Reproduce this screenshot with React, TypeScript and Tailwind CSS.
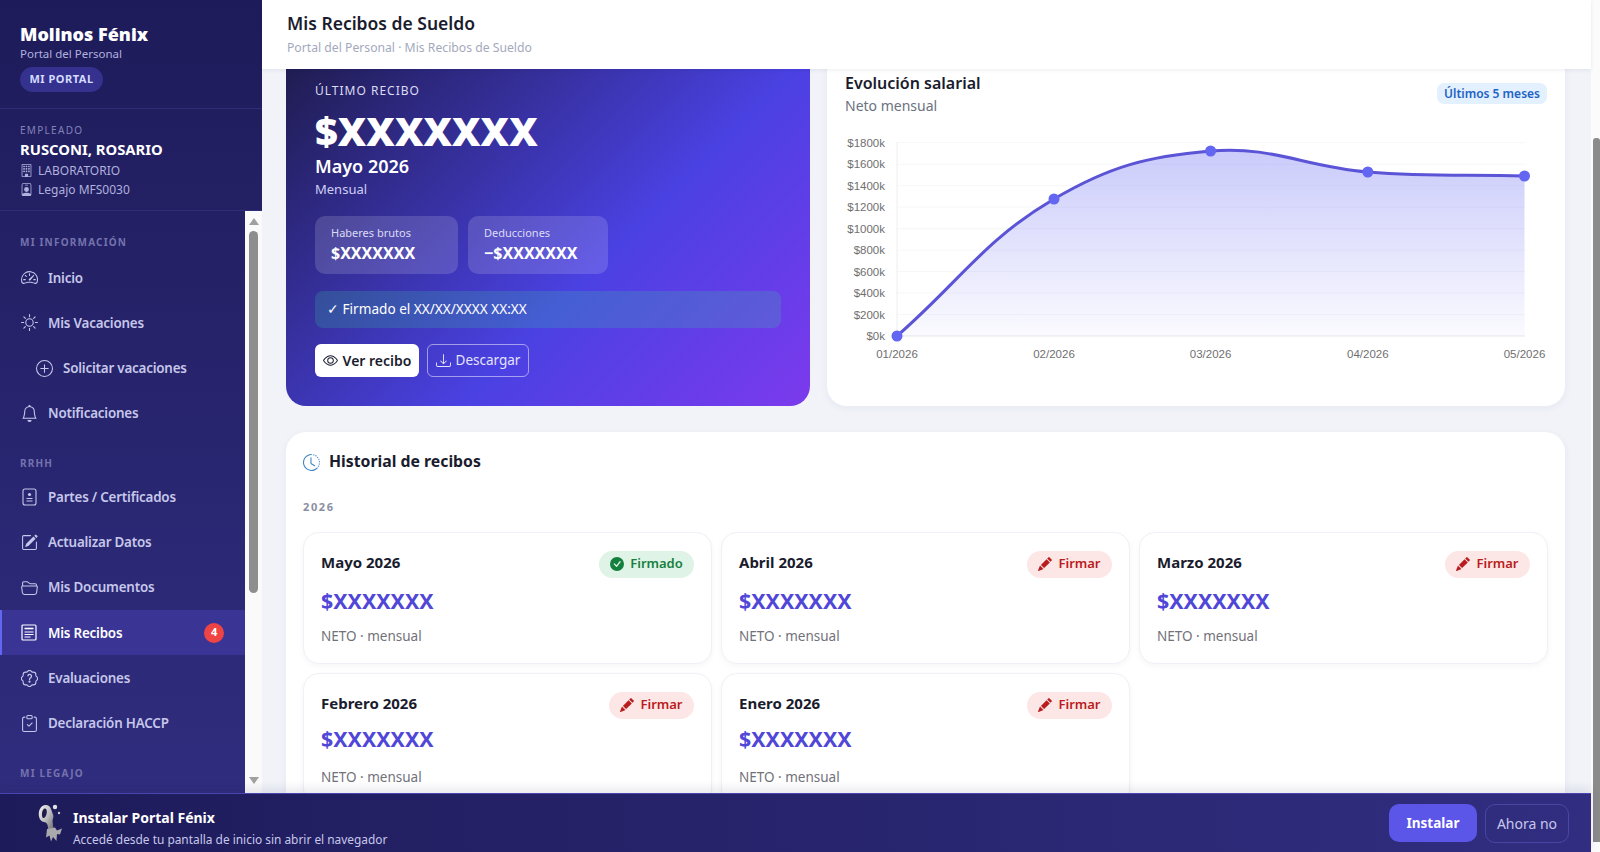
import React from "react";
import {
  BsSpeedometer2, BsSun, BsPlusCircle, BsBell, BsPencilSquare, BsFolder2Open,
  BsPatchQuestion, BsClipboardCheck, BsBuilding, BsPersonBadge, BsEye, BsDownload,
  BsClockHistory, BsCheckCircleFill, BsPencilFill,
} from "react-icons/bs";

const pts = [
  { x: 52, y: 206, l: "01/2026" },
  { x: 209, y: 69, l: "02/2026" },
  { x: 365.6, y: 21, l: "03/2026" },
  { x: 522.8, y: 42, l: "04/2026" },
  { x: 679.5, y: 46, l: "05/2026" },
];

function curve(): string {
  const t = 0.4;
  const ctrl = pts.map((c, i) => {
    const p = pts[Math.max(i - 1, 0)];
    const n = pts[Math.min(i + 1, pts.length - 1)];
    const d01 = Math.hypot(c.x - p.x, c.y - p.y);
    const d12 = Math.hypot(n.x - c.x, n.y - c.y);
    const s01 = d01 / (d01 + d12 || 1);
    const s12 = d12 / (d01 + d12 || 1);
    return {
      px: c.x - t * s01 * (n.x - p.x),
      py: c.y - t * s01 * (n.y - p.y),
      nx: c.x + t * s12 * (n.x - p.x),
      ny: c.y + t * s12 * (n.y - p.y),
    };
  });
  let d = `M${pts[0].x} ${pts[0].y}`;
  for (let i = 1; i < pts.length; i++) {
    d += ` C${ctrl[i - 1].nx} ${ctrl[i - 1].ny} ${ctrl[i].px} ${ctrl[i].py} ${pts[i].x} ${pts[i].y}`;
  }
  return d;
}

function Chart() {
  const line = curve();
  const ticks = [1800, 1600, 1400, 1200, 1000, 800, 600, 400, 200, 0];
  return (
    <svg width="702" height="244" viewBox="0 0 702 244" className="block" style={{ fontFamily: '"Liberation Sans", sans-serif' }}>
      <defs>
        <linearGradient id="fillArea" x1="0" y1="0" x2="0" y2="1">
          <stop offset="0" stopColor="#6366f1" stopOpacity="0.34" />
          <stop offset="1" stopColor="#6366f1" stopOpacity="0.03" />
        </linearGradient>
      </defs>
      {ticks.map((t, i) => {
        const y = 12.7 + i * 21.48;
        return (
          <g key={t}>
            <line x1="52" x2="680" y1={y} y2={y} stroke={t === 0 ? "#e5e7eb" : "#f6f7f9"} strokeWidth="1" />
            <text x="40" y={y + 4} textAnchor="end" fontSize="11.5" fill="#6f6f6f">${t}k</text>
          </g>
        );
      })}
      <line x1="52" x2="52" y1="12" y2="206" stroke="#eceef3" />
      <path d={`${line} L679.5 206 L52 206 Z`} fill="url(#fillArea)" />
      <path d={line} fill="none" stroke="#5b54d6" strokeWidth="3" />
      {pts.map((p) => (
        <g key={p.l}>
          <circle cx={p.x} cy={p.y} r="5.5" fill="#6366f1" />
          <text x={p.x} y={228} textAnchor="middle" fontSize="11.5" fill="#6f6f6f">{p.l}</text>
        </g>
      ))}
    </svg>
  );
}

function Logo() {
  return (
    <svg width="26" height="38" viewBox="0 0 26 38" className="shrink-0">
      <defs>
        <linearGradient id="metal" x1="0" y1="0" x2="1" y2="1">
          <stop offset="0" stopColor="#f4f4f4" />
          <stop offset="0.55" stopColor="#b9b9bd" />
          <stop offset="1" stopColor="#6b6b70" />
        </linearGradient>
      </defs>
      <path d="M7 1C2.500 1.500 0 7 1 12.500c.6 3.400 2.500 5 5 5.500 1.800.4 3 1 3.500 3l1 5 5-1-1-8 1-5-2.500-7C12 2 10 .7 7 1z" fill="url(#metal)" />
      <path d="M6.500 4.500C4.500 5.500 3.500 9 4.200 12.500c.3 1.200 1 1.800 1.800 1.500 1.800-1 3-4 2.800-6.800C8.700 5.300 7.700 4 6.500 4.500z" fill="#1e1b4b" />
      <circle cx="17" cy="3" r="2.200" fill="#e2e2e5" />
      <circle cx="21" cy="9" r="1.200" fill="#c9c9cc" />
      <path d="M9 25l8-1.500 2 3 5-2-2 6-3-.5-.5 7-3.500-4-2 4.500-1.500-6-3.500 2z" fill="#a9a9ae" />
    </svg>
  );
}

function PartesIcon() {
  return (
    <svg width="15" height="18" viewBox="0 0 15 18" fill="none" stroke="currentColor">
      <rect x="1" y="1" width="13" height="16" rx="2" strokeWidth="1.100" />
      <circle cx="7.500" cy="6.500" r="1.600" fill="currentColor" stroke="none" />
      <path d="M4.500 10.500h6M4.500 13h6" strokeWidth="1" />
    </svg>
  );
}

function RecibosIcon() {
  return (
    <svg width="16" height="17" viewBox="0 0 16 17" fill="none" stroke="currentColor">
      <rect x="1" y="1" width="14" height="15" rx="1" strokeWidth="1.200" />
      <path d="M3.500 4.500h9" strokeWidth="1.600" />
      <path d="M3.500 8h9M3.500 10.500h9M3.500 13h6" strokeWidth="1" />
    </svg>
  );
}

function Label({ first, children }: { first?: boolean; children: React.ReactNode }) {
  return (
    <div className={`h-[11px] flex items-center px-5 text-[10px] font-bold tracking-[1.2px] text-[#7473ad] ${first ? "mb-[7px]" : "mt-[22px] mb-[5px]"}`}>
      {children}
    </div>
  );
}

function Item({ icon, text, sub, active, badge }: { icon: React.ReactNode; text: string; sub?: boolean; active?: boolean; badge?: string }) {
  return (
    <div
      className={`h-[45.3px] flex items-center text-[13.4px] tracking-[-0.2px] font-semibold ${sub ? "pl-[35px] gap-[10px]" : "pl-5 gap-[10px]"} ${
        active ? "bg-[#3a3594] text-white border-l-[2px] border-[#6366f1] pl-[18px]" : "text-[#c6c7ea]"
      }`}
    >
      <span className="w-[18px] flex justify-center text-[17px] shrink-0">{icon}</span>
      <span className="flex-1">{text}</span>
      {badge && (
        <span className="mr-[21px] w-5 h-5 rounded-full bg-[#ef4444] text-white text-[11px] font-bold flex items-center justify-center">{badge}</span>
      )}
    </div>
  );
}

function Receipt({ month, signed, lower }: { month: string; signed?: boolean; lower?: boolean }) {
  return (
    <div className="h-[132px] rounded-[16px] border border-[#f0f1f6] bg-white shadow-[0_2px_6px_rgba(30,27,75,0.04)] pt-[17px] pl-[17px] pr-[17px]">
      <div className="flex items-center justify-between h-[28px]">
        <span className="mb-[4px] text-[15px] font-bold text-[#1a1c2e]">{month}</span>
        {signed ? (
          <span className="w-[95px] h-[27px] rounded-full bg-[#dff3e7] text-[#15803d] text-[13px] font-semibold flex items-center justify-center gap-[6px]">
            <BsCheckCircleFill className="text-[14px]" /> Firmado
          </span>
        ) : (
          <span className="w-[85px] h-[27px] rounded-full bg-[#fde6e6] text-[#b91c1c] text-[13px] font-semibold flex items-center justify-center gap-[6px]">
            <BsPencilFill className="text-[14px]" /> Firmar
          </span>
        )}
      </div>
      <div className={`h-[30px] leading-[30px] text-[21.4px] font-bold text-[#5046d8] ${lower ? "mt-[5px]" : "mt-[8px]"}`}>$XXXXXXX</div>
      <div className={`h-[20px] leading-[20px] text-[13.5px] text-[#71717a] ${lower ? "mt-[13px]" : "mt-[10px]"}`}>NETO · mensual</div>
    </div>
  );
}

export default function App() {
  return (
    <div className="relative w-[1600px] h-[852px] overflow-hidden flex bg-[#f1f3f9]" style={{ fontFamily: '"Noto Sans", sans-serif' }}>
      <aside className="w-[262px] shrink-0 flex flex-col bg-linear-to-b from-[#1e1b5a] via-[#28256f] to-[#312e81] z-10">
        <div className="h-[109px] shrink-0 px-5 pt-[21px] border-b border-[#2f2c78]">
          <div className="text-[18px] leading-[26px] font-black text-white">Molinos Fénix</div>
          <div className="text-[11.5px] leading-[16px] text-[#b0b1dc] -mt-[1px]">Portal del Personal</div>
          <div className="mt-[5px] w-[83px] h-[25px] rounded-full bg-[#34318f] text-[#d5dcff] text-[11px] font-bold tracking-[0.5px] flex items-center justify-center">MI PORTAL</div>
        </div>
        <div className="h-[102px] shrink-0 px-5 pt-[14px] border-b border-[#2f2c78]">
          <div className="text-[10px] leading-[14px] tracking-[1.3px] text-[#8182b8]">EMPLEADO</div>
          <div className="text-[14.8px] leading-[22px] font-bold text-white mt-[1px]">RUSCONI, ROSARIO</div>
          <div className="flex items-center gap-[5px] text-[12px] leading-[19px] text-[#b0b1dc] mt-[1px]"><BsBuilding className="text-[13px]" />LABORATORIO</div>
          <div className="flex items-center gap-[5px] text-[12px] leading-[19px] text-[#b0b1dc]"><BsPersonBadge className="text-[13px]" />Legajo MFS0030</div>
        </div>
        <div className="flex-1 min-h-0 flex">
          <nav className="w-[245px] pt-[26px] overflow-hidden">
            <Label first>MI INFORMACIÓN</Label>
            <Item icon={<BsSpeedometer2 />} text="Inicio" />
            <Item icon={<BsSun />} text="Mis Vacaciones" />
            <Item icon={<BsPlusCircle />} text="Solicitar vacaciones" sub />
            <Item icon={<BsBell />} text="Notificaciones" />
            <Label>RRHH</Label>
            <Item icon={<PartesIcon />} text="Partes / Certificados" />
            <Item icon={<BsPencilSquare />} text="Actualizar Datos" />
            <Item icon={<BsFolder2Open />} text="Mis Documentos" />
            <Item icon={<RecibosIcon />} text="Mis Recibos" active badge="4" />
            <Item icon={<BsPatchQuestion />} text="Evaluaciones" />
            <Item icon={<BsClipboardCheck />} text="Declaración HACCP" />
            <Label>MI LEGAJO</Label>
          </nav>
          <div className="w-[17px] bg-[#fafafa] flex flex-col items-center pt-[7px]">
            <div className="w-0 h-0 border-x-[5px] border-x-transparent border-b-[7px] border-b-[#a0a0a0]" />
            <div className="mt-[6px] w-[9px] h-[362px] rounded-full bg-[#8e8e8e]" />
            <div className="mt-[184px] w-0 h-0 border-x-[5px] border-x-transparent border-t-[7px] border-t-[#a0a0a0]" />
          </div>
        </div>
      </aside>

      <main className="w-[1329px] shrink-0 flex flex-col min-h-0">
        <header className="h-[69px] shrink-0 bg-white pl-[25px] pt-[10px] z-10 shadow-[0_1px_4px_rgba(30,27,75,0.08)]">
          <div className="text-[17.5px] leading-[26px] font-semibold text-[#1a1c2e]">Mis Recibos de Sueldo</div>
          <div className="text-[12.2px] leading-[18px] mt-[3px] text-[#a3a9bd]">Portal del Personal · Mis Recibos de Sueldo</div>
        </header>
        <div className="flex-1 min-h-0 overflow-hidden pl-[24px] pr-[25px] -mt-[21px]">
          <div className="grid grid-cols-[524px_738px] gap-[17px]">
            <section className="h-[358px] rounded-[20px] px-[29px] pt-[34px] text-white bg-[linear-gradient(135deg,#1e1b4b_0%,#4a41e2_60%,#7c3aed_100%)]">
              <div className="h-[18px] leading-[18px] text-[12px] tracking-[1px] text-[#dcdcf5]">ÚLTIMO RECIBO</div>
              <div className="mt-[9px] h-[44px] leading-[44px] text-[39.5px] font-black">$XXXXXXX</div>
              <div className="mt-[1px] h-[24px] leading-[24px] text-[18px] font-semibold">Mayo 2026</div>
              <div className="mt-[1px] h-[20px] leading-[20px] text-[13px] text-[#cfcff5]">Mensual</div>
              <div className="mt-[17px] flex gap-[10px]">
                <div className="w-[143px] h-[58px] rounded-[10px] bg-white/15 pl-[16px] pt-[9px]">
                  <div className="text-[11px] leading-[16px] text-[#dcdcf5]">Haberes brutos</div>
                  <div className="text-[16px] leading-[24px] font-bold">$XXXXXXX</div>
                </div>
                <div className="w-[140px] h-[58px] rounded-[10px] bg-white/15 pl-[16px] pt-[9px]">
                  <div className="text-[11px] leading-[16px] text-[#dcdcf5]">Deducciones</div>
                  <div className="text-[16px] leading-[24px] font-bold">−$XXXXXXX</div>
                </div>
              </div>
              <div className="mt-[17px] h-[37px] rounded-[8px] bg-[#34d399]/20 pl-[12px] flex items-center text-[13.6px]">✓ Firmado el XX/XX/XXXX XX:XX</div>
              <div className="mt-[16px] flex gap-[8px]">
                <button className="w-[104px] h-[33px] rounded-[6px] bg-white text-[#1a1c2e] text-[14px] font-semibold flex items-center justify-center gap-[5px]"><BsEye className="text-[15px]" />Ver recibo</button>
                <button className="w-[102px] h-[33px] rounded-[6px] border border-white/50 text-[#e4e4fb] text-[13.5px] flex items-center justify-center gap-[5px]"><BsDownload className="text-[15px]" />Descargar</button>
              </div>
            </section>
            <section className="h-[358px] rounded-[20px] bg-white shadow-[0_2px_8px_rgba(30,27,75,0.05)] px-[18px] pt-[24px]">
              <div className="flex justify-between h-[46px]">
                <div>
                  <div className="text-[16px] leading-[22px] font-semibold text-[#1a1c2e]">Evolución salarial</div>
                  <div className="text-[14px] leading-[22px] mt-[1px] text-[#6b7280]">Neto mensual</div>
                </div>
                <div className="mt-[11px] w-[110px] h-[21px] rounded-[7px] bg-[#e3f0fd] text-[#1d63c4] text-[12px] font-semibold flex items-center justify-center">Últimos 5 meses</div>
              </div>
              <div className="mt-[12px]"><Chart /></div>
            </section>
          </div>
          <section className="mt-[26px] w-[1279px] rounded-[20px] bg-white shadow-[0_2px_8px_rgba(30,27,75,0.05)] pt-[18px] px-[17px] pb-6">
            <div className="flex items-center gap-[9px] h-[24px]">
              <BsClockHistory className="text-[17px] text-[#3b82c4]" />
              <span className="text-[15.8px] font-bold text-[#1a1c2e]">Historial de recibos</span>
            </div>
            <div className="mt-[26px] h-[14px] leading-[14px] text-[11px] font-bold tracking-[1.6px] text-[#8b8fa3]">2026</div>
            <div className="mt-[18px] grid grid-cols-3 gap-[9px]">
              <Receipt month="Mayo 2026" signed />
              <Receipt month="Abril 2026" />
              <Receipt month="Marzo 2026" />
              <Receipt month="Febrero 2026" lower />
              <Receipt month="Enero 2026" lower />
            </div>
          </section>
        </div>
      </main>

      <div className="w-[9px] shrink-0 bg-[#fbfbfc] pl-[2px] pt-[138px]">
        <div className="w-[7px] h-[704px] rounded-t-[3px] bg-[#8b8b8b]" />
      </div>

      <div className="absolute left-0 bottom-0 w-[1591px] h-[59px] z-20 border-t border-[#4a45b0] bg-linear-to-r from-[#1e1b5a] to-[#312e81] shadow-[0_-4px_10px_rgba(30,27,75,0.10)] flex items-center pl-[38px] pr-[22px]">
        <Logo />
        <div className="ml-[9px] flex-1 mt-[9px]">
          <div className="text-[14px] leading-[20px] font-bold text-white">Instalar Portal Fénix</div>
          <div className="text-[11.9px] leading-[18px] mt-[2px] text-[#c7c8ea]">Accedé desde tu pantalla de inicio sin abrir el navegador</div>
        </div>
        <button className="w-[88px] h-[38px] rounded-[10px] bg-[#5b55e8] text-white text-[13.5px] font-bold">Instalar</button>
        <button className="ml-[8px] w-[84px] h-[39px] rounded-[10px] border border-[#4a46a5] text-[#c7c8ea] text-[14px]">Ahora no</button>
      </div>
    </div>
  );
}
